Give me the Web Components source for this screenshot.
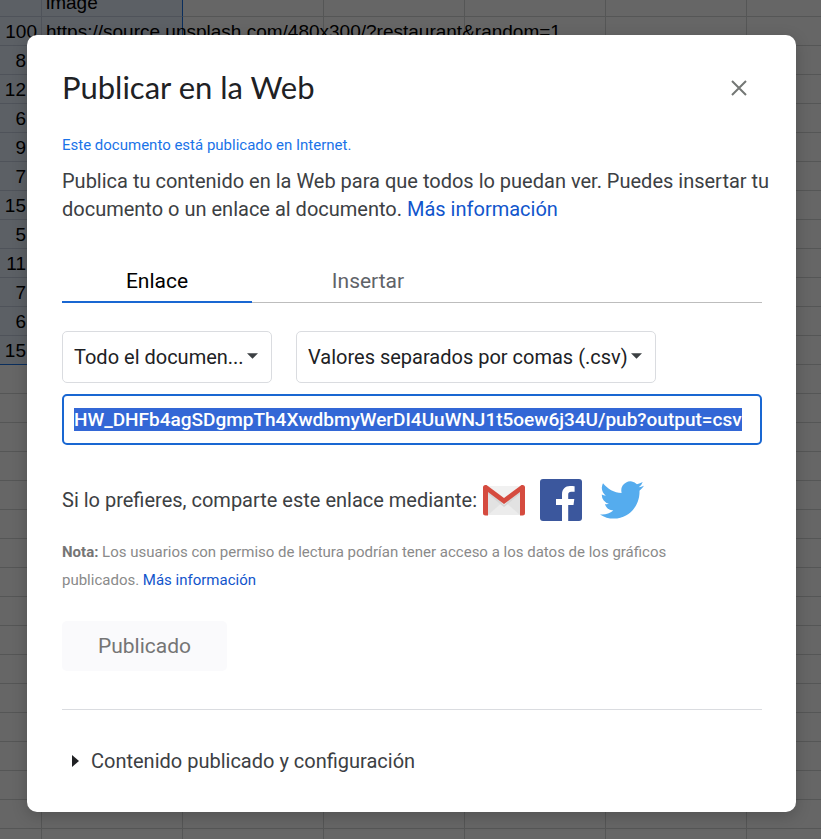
<!DOCTYPE html>
<html lang="es">
<head>
<meta charset="utf-8">
<meta name="viewport" content="width=device-width, initial-scale=1">
<title>Publicar en la Web</title>
<style>
html, body { margin: 0; height: 100%; }
body { font-family: Roboto, "Liberation Sans", sans-serif; font-size: 20px; color: #3c4043; overflow: hidden; }
</style>
</head>
<body>
<publish-app></publish-app>
<script>
function define(name, html, setup) {
  customElements.define(name, class extends HTMLElement {
    constructor() {
      super();
      this.attachShadow({ mode: "open" }).innerHTML = html;
    }
    connectedCallback() { if (setup) setup(this, this.shadowRoot); }
  });
}

define("sheet-grid", `
<style>
:host { display: block; overflow: hidden; background: #fff; font-family: "Liberation Sans", Arial, sans-serif; font-size: 19px; color: #000; }
table { border-collapse: separate; border-spacing: 0; table-layout: fixed; width: 888px; margin-top: -12px; }
col { width: 141px; }
col.first { width: 42px; }
td { box-sizing: border-box; height: 29px; padding: 2px 4px 0; line-height: 26px; border-right: 1px solid #d5d6d6; border-bottom: 1px solid #d5d6d6; white-space: nowrap; }
td.num { text-align: right; }
td.cut { padding-right: 15px; }
td.sel { background: #e6effc; border-color: #c6d0e0; }
td.edge { border-right-color: #1a73e8; }
tr.last td.sel { border-bottom-color: #1a73e8; }
</style>
<table><colgroup><col class="first"><col><col><col><col><col><col></colgroup><tbody></tbody></table>`,
(host, root) => {
  const nums = ["", "100", "8", "12", "6", "9", "7", "15", "5", "11", "7", "6", "15"];
  const body = root.querySelector("tbody");
  for (let r = 0; r < 31; r++) {
    const tr = body.insertRow();
    const selected = r < nums.length;
    if (r === nums.length - 1) tr.className = "last";
    for (let c = 0; c < 7; c++) {
      const td = tr.insertCell();
      if (selected && c < 2) td.classList.add("sel");
      if (selected && c === 1) td.classList.add("edge");
      if (c === 0) {
        td.classList.add("num");
        if (r > 1) td.classList.add("cut");
        td.textContent = nums[r] || "";
      }
    }
  }
  body.rows[0].cells[1].textContent = "image";
  body.rows[1].cells[1].textContent = "https://source.unsplash.com/480x300/?restaurant&random=1";
});

define("modal-dialog", `
<style>
:host { display: block; background: #fff; border-radius: 10px; padding: 32px 34px 37px 35px; box-shadow: 0 4px 16px rgba(0,0,0,.2); }
header { display: flex; align-items: center; justify-content: space-between; height: 44px; }
button { display: flex; padding: 8px; margin: 0 7px 2px 0; border: 0; background: none; color: #747775; }
svg { display: block; }
</style>
<header>
  <slot name="title"></slot>
  <button type="button" aria-label="Cerrar"><svg width="16" height="16" viewBox="0 0 16 16" fill="none" stroke="currentColor" stroke-width="2"><path d="M1 1 15 15M15 1 1 15"/></svg></button>
</header>
<slot></slot>`);

define("tab-bar", `
<style>
:host { display: block; margin-top: 36px; }
div { display: flex; gap: 21px; box-shadow: inset 0 -1px #bdbdbd; }
button { width: 190px; height: 44px; padding: 2px 0 0; border: 0; border-bottom: 2px solid transparent; background: none; font: 400 21px/28px "Google Sans", Roboto, sans-serif; color: #5f6368; }
button[aria-selected="true"] { color: #000; border-bottom-color: #1967d2; }
</style>
<div role="tablist">
  <button type="button" role="tab" aria-selected="true">Enlace</button>
  <button type="button" role="tab" aria-selected="false">Insertar</button>
</div>`);

define("select-box", `
<style>
:host { display: grid; align-items: center; }
select, svg { grid-area: 1 / 1; }
select { appearance: none; box-sizing: border-box; width: 100%; height: 52px; margin: 0; padding: 0 24px 0 11px; border: 1px solid #dadce0; border-radius: 5px; background: #fff; font: inherit; color: #202124; }
svg { justify-self: end; margin: 0 14px 2px 0; pointer-events: none; }
</style>
<select><option></option></select>
<svg width="11" height="6" viewBox="0 0 12 6" fill="#3c4043"><path d="M0 0h12L6 6z"/></svg>`,
(host, root) => {
  root.querySelector("option").textContent = host.getAttribute("value");
  root.querySelector("select").setAttribute("aria-label", host.getAttribute("label"));
});

define("link-field", `
<style>
:host { display: block; margin-top: 11px; }
input { display: block; box-sizing: border-box; width: 100%; height: 51px; padding: 0 10px; border: 2px solid #1967d2; border-radius: 5px; outline: 0; background: #fff; font: 500 19px Roboto, sans-serif; color: #202124; }
input::selection { background: #3367d6; color: #fff; }
</style>
<input type="text" aria-label="Enlace publicado" readonly value="HW_DHFb4agSDgmpTh4XwdbmyWerDI4UuWNJ1t5oew6j34U/pub?output=csv">`,
(host, root) => {
  const input = root.querySelector("input");
  input.focus();
  input.select();
  input.scrollLeft = input.scrollWidth;
});

define("share-row", `
<style>
:host { display: flex; align-items: center; margin-top: 34px; }
a { display: block; }
svg { display: block; }
.gmail { margin-left: 6px; }
.facebook { margin-left: 15px; }
.twitter { margin-left: 18px; }
</style>
<span>Si lo prefieres, comparte este enlace mediante:</span>
<a class="gmail" href="#" aria-label="Gmail"><svg width="42" height="42" viewBox="0 0 42 42">
  <path fill="#e2e2e2" d="M2 7h38v29H2z"/><path fill="#ececec" d="m5 36 16-14 16 14z"/><path fill="#d6d6d6" d="m5 11 16 15 16-15v4L21 28 5 15z"/>
  <path fill="#f1f1f1" d="M4 7h34L21 21z"/>
  <path fill="#d54b3f" d="M0 8.500a2.500 2.500 0 0 1 2.500-2.500h1L21 19 38.500 6h1A2.500 2.500 0 0 1 42 8.500V34a2.500 2.500 0 0 1-2.500 2.500H37V13L21 25 5 13v23.500H2.500A2.500 2.500 0 0 1 0 34z"/></svg></a>
<a class="facebook" href="#" aria-label="Facebook"><svg width="42" height="42" viewBox="0 0 42 42">
  <rect width="42" height="42" rx="3" fill="#3b579d"/>
  <path fill="#fff" d="M22 42V26h-6v-6h6v-4.500C22 10 25.300 7 30 7c2.300 0 4 .2 4.600.3v5.500h-3.200c-2.700 0-3.200 1.300-3.200 3.100V20h6.100l-.8 6h-5.300v16z"/></svg></a>
<a class="twitter" href="#" aria-label="Twitter"><svg width="44" height="42" viewBox="0 0 24 22" preserveAspectRatio="none">
  <path fill="#55acee" d="M23.953 3.570a10 10 0 0 1-2.825.775 4.958 4.958 0 0 0 2.163-2.723c-.951.555-2.005.959-3.127 1.184a4.920 4.920 0 0 0-8.384 4.482C7.690 7.095 4.067 5.130 1.640 2.162a4.822 4.822 0 0 0-.666 2.475c0 1.710.870 3.213 2.188 4.096a4.904 4.904 0 0 1-2.228-.616v.060a4.923 4.923 0 0 0 3.946 4.827 4.996 4.996 0 0 1-2.212.085 4.936 4.936 0 0 0 4.604 3.417 9.867 9.867 0 0 1-6.102 2.105c-.390 0-.779-.023-1.170-.067a13.995 13.995 0 0 0 7.557 2.209c9.053 0 13.998-7.496 13.998-13.985 0-.210 0-.420-.015-.630A9.935 9.935 0 0 0 24 3.590z"/></svg></a>`);

define("disclosure-row", `
<style>
:host { display: block; margin-top: 38px; border-top: 1px solid #dadce0; padding-top: 37px; }
button { display: flex; align-items: center; gap: 12px; padding: 0 10px; border: 0; background: none; font: inherit; line-height: 28px; color: #3c4043; }
</style>
<button type="button" aria-expanded="false"><svg width="7" height="12" viewBox="0 0 7 12" fill="#202124"><path d="M0 0l7 6-7 6z"/></svg><slot></slot></button>`);

define("publish-app", `
<style>
:host { display: grid; height: 100%; overflow: hidden; }
sheet-grid, .scrim { grid-area: 1 / 1; min-width: 0; min-height: 0; }
.scrim { z-index: 1; background: rgba(0,0,0,.6); padding: 35px 25px 27px 27px; }
h1 { margin: 0; padding-bottom: 4px; font: 400 31px/40px "Google Sans", Lato, sans-serif; color: #202124; }
p { margin: 0; line-height: 28px; }
a { color: #1155cc; text-decoration: none; }
.status { margin-top: 24px; font-size: 15px; line-height: 20px; color: #1a73e8; }
.intro { margin: 12px -14px 0 0; }
.selects { display: flex; gap: 24px; margin-top: 28px; }
.scope { width: 210px; }
.format { width: 360px; }
.note { margin-top: 17px; max-width: 640px; font-size: 15px; color: #8a8a8a; }
.note b { color: #757575; }
.publish { display: block; margin-top: 27px; width: 165px; height: 50px; padding: 0; border: 0; border-radius: 5px; background: #fafafc; font: 400 21px/28px "Google Sans", Roboto, sans-serif; color: #757575; }
</style>
<sheet-grid></sheet-grid>
<div class="scrim">
  <modal-dialog role="dialog" aria-label="Publicar en la Web">
    <h1 slot="title">Publicar en la Web</h1>
    <p class="status">Este documento está publicado en Internet.</p>
    <p class="intro">Publica tu contenido en la Web para que todos lo puedan ver. Puedes insertar tu documento o un enlace al documento. <a href="#">Más información</a></p>
    <tab-bar></tab-bar>
    <div class="selects">
      <select-box class="scope" label="Contenido" value="Todo el documen..."></select-box>
      <select-box class="format" label="Formato" value="Valores separados por comas (.csv)"></select-box>
    </div>
    <link-field></link-field>
    <share-row></share-row>
    <p class="note"><b>Nota:</b> Los usuarios con permiso de lectura podrían tener acceso a los datos de los gráficos publicados. <a href="#">Más información</a></p>
    <button class="publish" type="button" disabled>Publicado</button>
    <disclosure-row>Contenido publicado y configuración</disclosure-row>
  </modal-dialog>
</div>`);
</script>
</body>
</html>
